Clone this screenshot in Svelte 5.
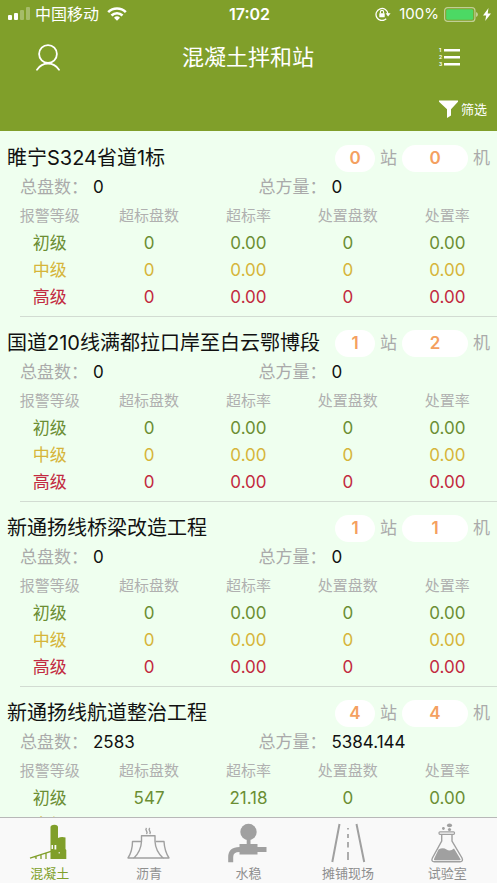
<script>
  const zero = ['0', '0.00', '0', '0.00'];
  const levels = [
    { name: '初级', kind: 'low' },
    { name: '中级', kind: 'mid' },
    { name: '高级', kind: 'high' },
  ];
  const projects = [
    { name: '睢宁S324省道1标', stations: 0, machines: 0, batches: '0', volume: '0', rows: [zero, zero, zero] },
    { name: '国道210线满都拉口岸至白云鄂博段', stations: 1, machines: 2, batches: '0', volume: '0', rows: [zero, zero, zero] },
    { name: '新通扬线桥梁改造工程', stations: 1, machines: 1, batches: '0', volume: '0', rows: [zero, zero, zero] },
    { name: '新通扬线航道整治工程', stations: 4, machines: 4, batches: '2583', volume: '5384.144', rows: [['547', '21.18', '0', '0.00'], zero, zero] },
  ];
  const tabs = ['混凝土', '沥青', '水稳', '摊铺现场', '试验室'];
  let active = $state(0);
</script>

<div class="app">
  <header>
    <div class="status">
      <div class="side">
        <svg class="signal" width="22" height="14" viewBox="0 0 22 14" fill="#fff">
          <rect x="0" y="8" width="4" height="5" rx="1" />
          <rect x="6" y="6" width="4" height="7" rx="1" />
          <rect x="12" y="3" width="4" height="10" rx="1" opacity=".3" />
          <rect x="18" y="0" width="4" height="13" rx="1" opacity=".3" />
        </svg>
        <span>中国移动</span>
        <svg class="wifi" width="20" height="14" viewBox="0 0 20 14" fill="none" stroke="#fff" stroke-width="2.6">
          <path d="M1.2 5.2a12.4 12.4 0 0 1 17.6 0" />
          <path d="M4.5 8.5a7.8 7.8 0 0 1 11 0" />
          <path d="M10 13.8 7 10.8a4.3 4.3 0 0 1 6 0z" fill="#fff" stroke="none" />
        </svg>
      </div>
      <time>17:02</time>
      <div class="side end">
        <svg class="lock" width="16" height="14" viewBox="0 0 16 14" fill="none" stroke="#fff" stroke-width="1.3">
          <path d="M11.2 11.8A6 6 0 1 1 13 7" />
          <path d="M10.6 6.2h5L13.1 9.4z" fill="#fff" stroke="none" />
          <rect x="4.3" y="6.2" width="5.4" height="4.1" rx=".5" fill="#fff" stroke="none" />
          <path d="M5.4 6.4V5a1.6 1.6 0 0 1 3.2 0v1.4" stroke-width="1.1" />
        </svg>
        <span class="percent">100%</span>
        <svg width="34" height="15" viewBox="0 0 34 15">
          <rect x=".6" y=".6" width="30.3" height="13.8" rx="3" fill="none" stroke="#fff" stroke-opacity=".5" stroke-width="1.2" />
          <rect x="2.2" y="2.2" width="27" height="10.6" rx="1.5" fill="#4cd964" />
          <path d="M32 5v5q2-.8 2-2.5T32 5z" fill="#fff" opacity=".5" />
        </svg>
        <svg class="bolt" width="8" height="13" viewBox="0 0 8 13" fill="#fff">
          <path d="M5.5 0 0 7.4h3.2L2.2 13 8 5.4H4.7z" />
        </svg>
      </div>
    </div>

    <div class="bar">
      <button class="user" aria-label="用户">
        <svg width="24" height="27" viewBox="0 0 24 27" fill="none" stroke="#fff" stroke-width="1.8" stroke-linecap="round">
          <circle cx="12" cy="10" r="8.9" />
          <path d="M1 25.7C3.5 22 7.5 19.5 12 19.5s8.500 2.500 11 6.200" />
        </svg>
      </button>
      <h1>混凝土拌和站</h1>
      <button class="menu" aria-label="列表">
        <svg width="22" height="22" viewBox="0 0 22 22" fill="#fff">
          <g class="nums">
            <text x="1" y="6">1</text>
            <text x="1" y="13">2</text>
            <text x="1" y="20">3</text>
          </g>
          <rect x="6" y="3" width="16" height="2.500" />
          <rect x="6" y="10" width="16" height="2.500" />
          <rect x="6" y="17" width="16" height="2.500" />
        </svg>
      </button>
    </div>

    <div class="tools">
      <button class="filter">
        <svg width="19" height="18" viewBox="0 0 19 18" fill="#fff">
          <path d="M0 .5h19v1.300L12 9.300v6.200L8 18V9.300L0 1.800z" />
        </svg>
        筛选
      </button>
    </div>
  </header>

  <main>
    {#each projects as p}
      <article>
        <div class="head">
          <h2>{p.name}</h2>
          <b>{p.stations}</b><span>站</span>
          <b class="wide">{p.machines}</b><span>机</span>
        </div>
        <dl>
          <div><dt>总盘数：</dt><dd>{p.batches}</dd></div>
          <div><dt>总方量：</dt><dd>{p.volume}</dd></div>
        </dl>
        <table>
          <thead>
            <tr><th>报警等级</th><th>超标盘数</th><th>超标率</th><th>处置盘数</th><th>处置率</th></tr>
          </thead>
          <tbody>
            {#each levels as level, i}
              <tr class={level.kind}>
                <td>{level.name}</td>
                {#each p.rows[i] as v}<td>{v}</td>{/each}
              </tr>
            {/each}
          </tbody>
        </table>
      </article>
    {/each}
  </main>

  <nav>
    {#each tabs as tab, i}
      <button class:active={active === i} onclick={() => (active = i)}>
        <svg width="48" height="40" viewBox="0 0 48 40" fill="none" stroke="currentColor">
          {#if i === 0}
            <path fill="currentColor" stroke="none" fill-rule="evenodd" d="M24.500 4q0-2 4-2.300 3.500.3 3.500 2.300v11q3.200-1.500 7.500-.5v11.500l.8 1V36H24.500zM25.500 22v4h1.500v-4zm3 0v4.500h1.800V22zm4.200 7v1.500h1V29z" />
            <path d="M4 35.200 25 28.300M10 33.500v2.500M15 32v4M20 30.500V36" stroke-width="1.300" />
          {:else if i === 1}
            <g stroke-width="1.400" stroke-linejoin="round">
              <path d="M16.500 12.700h13.500v5.800q.5 9.500 8 16.500H9q7-7 7.500-16.500z" />
              <path d="M16 18.500H7.500Q7.500 28 3 35h6M30.500 18.500H39Q39.500 28 44 35h-6" />
              <path d="M21.500 5q-1.200 1.500 0 3t0 3M24.700 5q-1.200 1.500 0 3t0 3" />
            </g>
          {:else if i === 2}
            <g fill="currentColor" stroke="none">
              <circle cx="24.500" cy="9" r="8.200" />
              <path d="M22.700 16h3.800v5h7v3H42.500v5H33.500v2.500H15.500V29q-6.300 0-6.300 5v5.200H4.200V34q0-10 11.300-10v-3h7.200z" />
            </g>
          {:else if i === 3}
            <path d="M15.500 1 8.300 39M32.500 1l7.700 38" stroke-width="2" />
            <path d="M24 5v1.500M24 11v4M24 19v5.500M24 29v8" stroke-width="1.700" />
          {:else}
            <path d="M18.700 11.500V18L9.400 35q-1.600 3.700 2 3.700H37q3.600 0 2-3.700L29 18v-6.500" stroke-width="1.400" />
            <rect x="16" y="8.800" width="15.500" height="2.500" rx="1" stroke-width="1.200" />
            <g fill="currentColor" stroke="none">
              <path d="M15.500 26.500q4.500-2.500 8 0 3.700 2.200 7.500-1l6.500 10.700q.6 1-1 1H12.200q-1.700 0-1.200-1.200z" />
              <ellipse cx="26.500" cy="2.400" rx="2.600" ry="1.800" />
              <circle cx="20.400" cy="5.500" r="1.400" />
              <circle cx="26.500" cy="6.500" r="1.600" />
            </g>
          {/if}
        </svg>
        {tab}
      </button>
    {/each}
  </nav>
</div>

<style>
  :global(body) {
    margin: 0;
  }
  .app {
    display: flex;
    flex-direction: column;
    height: 100vh;
    background: #efffef;
    font-family: Inter, 'Noto Sans CJK SC', sans-serif;
    color: #111;
  }
  button {
    display: flex;
    align-items: center;
    padding: 0;
    border: 0;
    background: none;
    color: inherit;
    font: inherit;
  }
  svg {
    display: block;
    flex: none;
  }

  header {
    flex: none;
    background: #809f2a;
    color: #fff;
  }
  .status {
    display: grid;
    grid-template-columns: 1fr auto 1fr;
    align-items: center;
    height: 28px;
    padding: 0 6px 0 8px;
    font-size: 16px;
    line-height: 28px;
  }
  .side {
    display: flex;
    align-items: center;
  }
  .end {
    justify-content: flex-end;
  }
  .signal {
    margin-right: 5px;
  }
  .wifi {
    margin-left: 8px;
  }
  time {
    font-weight: 600;
  }
  .lock {
    margin-right: 8px;
  }
  .percent {
    margin-right: 5px;
    font-size: 15px;
  }
  .bolt {
    margin-left: 5px;
  }

  .bar {
    display: grid;
    grid-template-columns: 1fr auto 1fr;
    align-items: center;
    height: 58px;
    padding: 0 37px 0 36px;
  }
  h1 {
    margin: 0;
    font-size: 22px;
    font-weight: 400;
    line-height: 30px;
  }
  .menu {
    justify-self: end;
  }
  .nums {
    font-size: 5px;
    font-weight: 700;
  }
  .tools {
    display: flex;
    justify-content: flex-end;
    height: 45px;
    padding-right: 10px;
  }
  .filter {
    gap: 3px;
    font-size: 13px;
  }

  main {
    flex: 1;
    min-height: 0;
    padding-top: 1px;
    overflow-y: auto;
    scrollbar-width: none;
  }
  article {
    padding: 12px 0 6px;
    background: linear-gradient(#d2dcd2, #d2dcd2) 20px 100% / 100% 1px no-repeat;
  }
  .head {
    display: flex;
    align-items: center;
    gap: 5px;
    height: 29px;
    padding: 0 7px;
    color: #aaa;
    font-size: 17px;
    line-height: 27px;
  }
  h2 {
    flex: 1;
    min-width: 0;
    margin: 0;
    overflow: hidden;
    color: #111;
    font-size: 20px;
    font-weight: 400;
    line-height: 29px;
    white-space: nowrap;
  }
  .head b {
    width: 40px;
    border-radius: 14px;
    background: #fff;
    color: #f4a060;
    font-weight: 600;
    text-align: center;
  }
  .head .wide {
    width: 66px;
  }
  dl {
    display: grid;
    grid-template-columns: 1fr 1fr;
    margin: 0;
    padding-left: 20px;
    font-size: 17px;
    line-height: 28px;
  }
  dl div {
    display: flex;
    gap: 5px;
    height: 28px;
  }
  dt {
    color: #aaa;
  }
  dd {
    margin: 0;
  }
  table {
    width: 100%;
    table-layout: fixed;
    border-collapse: collapse;
    text-align: center;
  }
  th,
  td {
    height: 27px;
    padding: 0;
    font-size: 17px;
    line-height: 27px;
  }
  th {
    height: 29px;
    color: #b0b0b0;
    font-size: 15px;
    font-weight: 400;
    line-height: 29px;
  }
  .low {
    color: #6b8e33;
  }
  .mid {
    color: #d6b53a;
  }
  .high {
    color: #c22a40;
  }

  nav {
    display: grid;
    grid-template-columns: repeat(5, 1fr);
    flex: none;
    height: 65px;
    border-top: 1px solid #b8b8b8;
    background: #f9f9f9;
    color: #8f8f8f;
    font-size: 13px;
    line-height: 20px;
  }
  nav button {
    flex-direction: column;
    padding-top: 5px;
  }
  nav svg {
    color: #a0a0a0;
  }
  .active,
  .active svg {
    color: #809f2a;
  }
</style>
